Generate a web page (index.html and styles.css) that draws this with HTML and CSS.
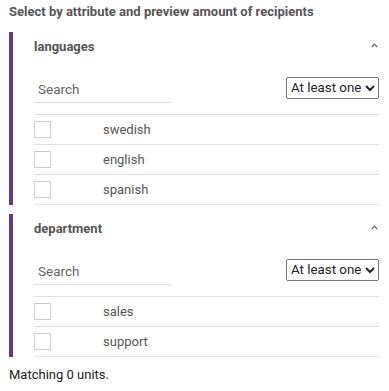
FILE: index.html
```html
<!DOCTYPE html>
<html>
<head>
<meta charset="utf-8">
<link rel="stylesheet" href="styles.css">
</head>
<body>
<div class="page">
  <div class="title">Select by attribute and preview amount of recipients</div>

  <section class="attr">
    <div class="attr-head">
      <span class="attr-name">languages</span>
      <svg class="caret" width="7" height="5" viewBox="0 0 7 5"><polyline points="0.8,4 3.5,1.2 6.2,4" fill="none" stroke="#666" stroke-width="1.2"/></svg>
    </div>
    <div class="filter">
      <input class="search" type="text" placeholder="Search">
      <select class="mode"><option>At least one</option><option>All</option></select>
    </div>
    <ul class="values">
      <li class="value"><span class="box"></span><span class="label">swedish</span></li>
      <li class="value"><span class="box"></span><span class="label">english</span></li>
      <li class="value"><span class="box"></span><span class="label">spanish</span></li>
    </ul>
  </section>

  <section class="attr">
    <div class="attr-head">
      <span class="attr-name">department</span>
      <svg class="caret" width="7" height="5" viewBox="0 0 7 5"><polyline points="0.8,4 3.5,1.2 6.2,4" fill="none" stroke="#666" stroke-width="1.2"/></svg>
    </div>
    <div class="filter">
      <input class="search" type="text" placeholder="Search">
      <select class="mode"><option>At least one</option><option>All</option></select>
    </div>
    <ul class="values">
      <li class="value"><span class="box"></span><span class="label">sales</span></li>
      <li class="value"><span class="box"></span><span class="label">support</span></li>
    </ul>
  </section>

  <div class="result">Matching 0 units.</div>
</div>
</body>
</html>
```

FILE: styles.css
```css
html, body {
  margin: 0;
  padding: 0;
  background: #fff;
}
body {
  font-family: Roboto, "Liberation Sans", sans-serif;
  font-size: 13px;
  color: #555;
}
.page {
  padding: 4px 10px 0 9px;
}
.title {
  font-weight: bold;
  line-height: 16px;
  color: #555;
}
.attr {
  margin-top: 12px;
  border-left: 4px solid #663a7f;
  padding-left: 21px;
}
.attr + .attr {
  margin-top: 9px;
}
.attr-head {
  height: 29px;
  display: flex;
  align-items: center;
  justify-content: space-between;
}
.attr-name {
  font-weight: bold;
  color: #555;
}
.caret {
  display: block;
  margin-right: 1px;
  margin-top: -2px;
}
.filter {
  display: flex;
  align-items: center;
  justify-content: space-between;
  padding: 10px 0 11px;
}
.search {
  box-sizing: border-box;
  width: 138px;
  height: 32px;
  border: none;
  border-bottom: 1px solid #ddd;
  padding: 4px 4px 0;
  font-family: Roboto, "Liberation Sans", sans-serif;
  font-size: 13.5px;
  color: #555;
  outline: none;
  margin: 0;
}
.search::placeholder {
  color: #666;
}
.mode {
  font-family: Roboto, "Liberation Sans", sans-serif;
  font-size: 13.33px;
  height: 22px;
  margin: 1px 0 0 0;
  color: #222;
}
.values {
  list-style: none;
  margin: 0;
  padding: 0;
  border-top: 1px solid #e0e0e0;
}
.value {
  height: 29px;
  border-bottom: 1px solid #e0e0e0;
  display: grid;
  grid-template-columns: 69px 1fr;
  align-items: center;
}
.box {
  box-sizing: border-box;
  width: 17px;
  height: 17px;
  border: 1px solid #ccc;
  margin-top: -1px;
}
.label {
  color: #555;
}
.result {
  margin-top: 10px;
  line-height: 16px;
  color: #222;
}
```
